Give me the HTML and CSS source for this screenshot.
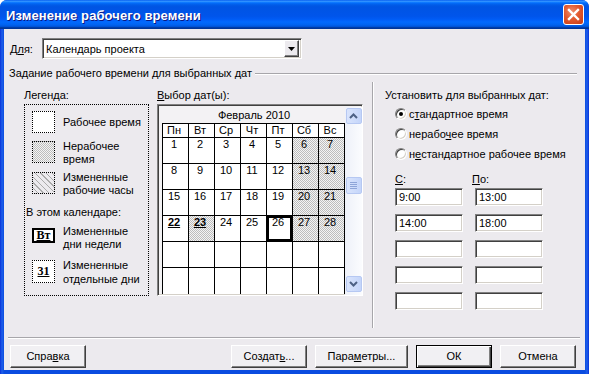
FILE: index.html
```html
<!DOCTYPE html>
<html lang="ru">
<head>
<meta charset="utf-8">
<title>Изменение рабочего времени</title>
<link rel="stylesheet" href="styles.css">
</head>
<body>
<div class="window">
  <div class="titlebar">
    <span class="title">Изменение рабочего времени</span>
    <div class="close">
      <svg width="19" height="19" viewBox="0 0 19 19"><path d="M5 5 L14 14 M14 5 L5 14" stroke="#fff" stroke-width="2.4" stroke-linecap="square"/></svg>
    </div>
  </div>
  <div class="content">
    <div class="for-row">
      <span class="for-label">Д<u>л</u>я:</span>
      <div class="combo">
        <span class="combo-text">Календарь проекта</span>
        <div class="combo-btn"><svg width="7" height="4" viewBox="0 0 7 4"><path d="M0 0 H7 L3.5 4 Z" fill="#000"/></svg></div>
      </div>
    </div>
    <div class="group-title"><span>Задание рабочего времени для выбранных дат</span><div class="etch"></div></div>
    <div class="main">
      <div class="legend-col">
        <div class="col-head">Легенда:</div>
        <div class="legend-box">
          <div class="leg-item r1"><div class="swatch white"></div><div class="leg-text">Рабочее время</div></div>
          <div class="leg-item r2"><div class="swatch gray"></div><div class="leg-text">Нерабочее<br>время</div></div>
          <div class="leg-item r3"><div class="swatch hatch"></div><div class="leg-text">Измененные<br>рабочие часы</div></div>
          <div class="leg-sub">В этом календаре:</div>
          <div class="leg-item r4"><div class="swatch solid"><u>Вт</u></div><div class="leg-text">Измененные<br>дни недели</div></div>
          <div class="leg-item r5"><div class="swatch day"><u>31</u></div><div class="leg-text">Измененные<br>отдельные дни</div></div>
        </div>
      </div>
      <div class="cal-col">
        <div class="col-head"><u>В</u>ыбор дат(ы):</div>
        <div class="cal-box">
          <div class="cal-main">
            <div class="month">Февраль 2010</div>
            <div class="grid">
              <div class="hd">Пн</div><div class="hd">Вт</div><div class="hd">Ср</div><div class="hd">Чт</div><div class="hd">Пт</div><div class="hd">Сб</div><div class="hd">Вс</div>
              <div class="d">1</div><div class="d">2</div><div class="d">3</div><div class="d">4</div><div class="d">5</div><div class="d off">6</div><div class="d off">7</div>
              <div class="d">8</div><div class="d">9</div><div class="d">10</div><div class="d">11</div><div class="d">12</div><div class="d off">13</div><div class="d off">14</div>
              <div class="d">15</div><div class="d">16</div><div class="d">17</div><div class="d">18</div><div class="d">19</div><div class="d off">20</div><div class="d off">21</div>
              <div class="d mod">22</div><div class="d off mod">23</div><div class="d">24</div><div class="d">25</div><div class="d sel">26</div><div class="d off">27</div><div class="d off">28</div>
              <div class="d"></div><div class="d"></div><div class="d"></div><div class="d"></div><div class="d"></div><div class="d"></div><div class="d"></div>
              <div class="d"></div><div class="d"></div><div class="d"></div><div class="d"></div><div class="d"></div><div class="d"></div><div class="d"></div>
            </div>
          </div>
          <div class="scroll">
            <div class="sbtn up"><svg width="9" height="6" viewBox="0 0 9 6"><path d="M1 5 L4.5 1.5 L8 5" fill="none" stroke="#4D6185" stroke-width="2"/></svg></div>
            <div class="thumb"><span></span><span></span><span></span><span></span></div>
            <div class="sbtn down"><svg width="9" height="6" viewBox="0 0 9 6"><path d="M1 1 L4.5 4.5 L8 1" fill="none" stroke="#4D6185" stroke-width="2"/></svg></div>
          </div>
        </div>
      </div>
      <div class="vsep"></div>
      <div class="right-col">
        <div class="set-label">Установить для выбранных дат:</div>
        <div class="radio-row"><span class="radio checked"></span><span>с<u>т</u>андартное время</span></div>
        <div class="radio-row"><span class="radio"></span><span>нерабо<u>ч</u>ее время</span></div>
        <div class="radio-row"><span class="radio"></span><span>н<u>е</u>стандартное рабочее время</span></div>
        <div class="tlabels">
          <div class="tlabel"><u>С</u>:</div>
          <div class="tlabel po"><u>П</u>о:</div>
        </div>
        <div class="times">
          <div class="tin">9:00</div><div class="tin">13:00</div>
          <div class="tin">14:00</div><div class="tin">18:00</div>
          <div class="tin"></div><div class="tin"></div>
          <div class="tin"></div><div class="tin"></div>
          <div class="tin"></div><div class="tin"></div>
        </div>
      </div>
    </div>
    <div class="hsep"></div>
    <div class="buttons">
      <div class="btn">Спра<u>в</u>ка</div>
      <div class="spacer"></div>
      <div class="btn">Создат<u>ь</u>...</div>
      <div class="btn wide">Пара<u>м</u>етры...</div>
      <div class="btn default">ОК</div>
      <div class="btn">Отмена</div>
    </div>
  </div>
</div>
</body>
</html>
```

FILE: styles.css
```css
* { box-sizing: border-box; }
html, body { margin: 0; padding: 0; }
body {
  width: 589px;
  height: 374px;
  overflow: hidden;
  background: #fff;
  font-family: "Liberation Sans", Arial, sans-serif;
  font-size: 11px;
  color: #000;
}
u { text-decoration: underline; text-underline-offset: 1px; }

.window {
  width: 589px;
  height: 374px;
  display: flex;
  flex-direction: column;
  background: linear-gradient(to right, #0831D9 0, #1E5FEA 2px, #0A4CE0 4px, #0A4CE0 585px, #1E5FEA 587px, #0831D9 589px);
  border-radius: 7px 7px 0 0;
  overflow: hidden;
}

.titlebar {
  height: 29px;
  flex: none;
  display: flex;
  align-items: center;
  justify-content: space-between;
  padding: 2px 5px 0 6px;
  background: linear-gradient(to bottom, #0058EE 0%, #3593FF 4%, #288EFF 6%, #127DFF 8%, #036FFC 10%, #0262EE 14%, #0057E5 20%, #0054E3 24%, #0055EB 56%, #005BF5 66%, #026AFE 76%, #0062EF 86%, #0052D6 92%, #0040AB 94%, #003092 100%);
}
.title {
  color: #fff;
  font-weight: bold;
  font-size: 13px;
  letter-spacing: 0.1px;
  text-shadow: 1px 1px #0A1883;
}
.close {
  width: 21px;
  height: 21px;
  border: 1px solid #fff;
  border-radius: 3px;
  background: radial-gradient(circle at 40% 35%, #F08E6D 0%, #E2592F 45%, #C63A14 100%);
  display: flex;
  align-items: center;
  justify-content: center;
  margin-top: -2px;
}

.content {
  flex: 1;
  margin: 0 4px 4px 4px;
  background: #ECEAEE;
  display: flex;
  flex-direction: column;
}

.for-row {
  display: flex;
  align-items: center;
  height: 21px;
  margin-top: 9px;
  padding-left: 6px;
}
.for-label { width: 32px; }
.combo {
  width: 260px;
  height: 21px;
  background: #fff;
  border: 1px solid;
  border-color: #808080 #fff #fff #808080;
  box-shadow: inset 1px 1px #404040, inset -1px -1px #D4D0C8;
  display: flex;
  align-items: center;
  padding: 0 2px 0 2px;
}
.combo-text { flex: 1; padding-left: 1px; }
.combo-btn {
  width: 15px;
  height: 17px;
  background: #ECEAEE;
  border: 1px solid;
  border-color: #fff #404040 #404040 #fff;
  box-shadow: inset -1px -1px #808080;
  display: flex;
  align-items: center;
  justify-content: center;
}

.group-title {
  display: flex;
  align-items: center;
  height: 13px;
  line-height: 13px;
  margin-top: 8px;
  padding-left: 5px;
}
.etch {
  flex: 1;
  height: 2px;
  margin: 0 8px 0 3px;
  border-top: 1px solid #A7A6AA;
  border-bottom: 1px solid #fff;
}

.main {
  display: flex;
  height: 246px;
  margin-top: 2px;
  padding-left: 20px;
}
.col-head {
  height: 13px;
  line-height: 13px;
  margin-bottom: 2px;
}

.legend-col { width: 125px; padding-top: 7px; flex: none; }
.legend-box {
  height: 192px;
  border: 1px dotted #000;
  padding: 6px 0 0 7px;
}
.leg-item { display: flex; height: 22px; }
.swatch {
  width: 23px;
  height: 22px;
  flex: none;
  border: 1px dotted #000;
}
.swatch.white { background: #fff; }
.swatch.gray { background: repeating-conic-gradient(#BDBDBD 0 25%, #F4F4F4 0 50%) 0 0 / 2px 2px; }
.swatch.hatch { background: repeating-linear-gradient(45deg, #ECEAEE 0 3px, #ABABAB 3px 4px); }
.leg-text { margin-left: 8px; line-height: 13px; }
.r1 .leg-text { margin-top: 5px; }
.r2 { margin-top: 8px; }
.r2 .leg-text, .r3 .leg-text { margin-top: -1px; }
.r3 { margin-top: 9px; }
.leg-sub {
  margin: 12px 0 0 -7px;
  padding-left: 1px;
  height: 13px;
  line-height: 13px;
}
.r4 { margin-top: 6px; height: 26px; }
.r5 { margin-top: 7px; height: 28px; }
.r5 .leg-text { line-height: 14px; }
.swatch.solid, .swatch.day {
  background: #fff;
  font-family: "Liberation Serif", "Times New Roman", serif;
  font-weight: bold;
  font-size: 12px;
  display: flex;
  align-items: center;
  justify-content: center;
}
.swatch.solid { height: 15px; margin-top: 3px; border: 2px solid #000; line-height: 11px; }
.swatch.day { height: 23px; margin-top: 2px; }

.cal-col { width: 206px; margin-left: 8px; padding-top: 7px; flex: none; }
.cal-box {
  width: 206px;
  height: 192px;
  border: 1px solid;
  border-color: #808080 #fff #fff #808080;
  box-shadow: inset 1px 1px #404040, inset -1px -1px #D4D0C8;
  background: #F3F2F4;
  display: flex;
  padding: 2px 1px 1px 2px;
  overflow: hidden;
}
.cal-main { width: 185px; padding-left: 2px; overflow: hidden; flex: none; }
.month {
  width: 183px;
  height: 16px;
  line-height: 16px;
  text-align: center;
  padding-left: 1px;
}
.grid {
  width: 183px;
  display: grid;
  grid-template-columns: repeat(7, 25px);
  grid-template-rows: 13px repeat(5, 25px) 40px;
  gap: 1px;
  padding: 1px 1px 0 1px;
  background: #000;
}
.grid > div {
  background: #fff;
  text-align: center;
  padding-right: 3px;
  line-height: 13px;
  font-size: 11px;
}
.grid .off { background: repeating-conic-gradient(#BDBDBD 0 25%, #F4F4F4 0 50%) 0 0 / 2px 2px; }
.grid .mod { font-weight: bold; text-decoration: underline; }
.grid .sel { outline: 2px solid #000; outline-offset: -2px; }

.scroll {
  width: 17px;
  height: 188px;
  flex: none;
  background: linear-gradient(to right, #EEF1F9, #FBFCFE);
  display: flex;
  flex-direction: column;
  align-items: center;
  padding-top: 1px;
}
.sbtn, .thumb {
  width: 16px;
  height: 16px;
  border: 1px solid #B6C8F2;
  border-radius: 2px;
  background: linear-gradient(to right, #D9E4FC, #C4D5FA);
  display: flex;
  align-items: center;
  justify-content: center;
}
.thumb {
  height: 17px;
  margin-top: 53px;
  flex-direction: column;
  gap: 1px;
}
.thumb span { display: block; width: 7px; height: 1px; background: #8EA5D8; }
.sbtn.down { margin-top: 82px; }

.vsep {
  width: 2px;
  height: 246px;
  margin-left: 9px;
  border-left: 1px solid #A7A6AA;
  border-right: 1px solid #fff;
  flex: none;
}

.right-col { margin-left: 11px; padding-top: 7px; flex: 1; }
.set-label { height: 13px; line-height: 13px; margin-bottom: 2px; }
.radio-row {
  display: flex;
  align-items: center;
  height: 20px;
  padding-left: 10px;
}
.radio {
  width: 12px;
  height: 12px;
  border-radius: 50%;
  background: #fff;
  border: 1px solid;
  border-color: #808080 #fff #fff #808080;
  box-shadow: inset 1px 1px #404040, inset -1px -1px #D4D0C8;
  margin-right: 2px;
  display: flex;
  align-items: center;
  justify-content: center;
  flex: none;
}
.radio.checked::after {
  content: "";
  width: 4px;
  height: 4px;
  border-radius: 50%;
  background: #000;
}
.tlabels {
  display: flex;
  padding-left: 10px;
  margin-top: 9px;
  height: 13px;
  line-height: 13px;
}
.tlabel { width: 77px; }
.times {
  display: grid;
  grid-template-columns: 68px 68px;
  grid-auto-rows: 18px;
  column-gap: 12px;
  row-gap: 8px;
  padding-left: 10px;
  margin-top: 2px;
}
.tin {
  height: 18px;
  background: #fff;
  border: 1px solid;
  border-color: #808080 #fff #fff #808080;
  box-shadow: inset 1px 1px #404040, inset -1px -1px #D4D0C8;
  padding-left: 3px;
  line-height: 16px;
}

.hsep {
  height: 2px;
  margin: 9px 5px 0 4px;
  border-top: 1px solid #A7A6AA;
  border-bottom: 1px solid #fff;
}
.buttons {
  display: flex;
  height: 23px;
  margin-top: 6px;
  padding: 0 9px 0 6px;
  gap: 8px;
}
.spacer { flex: 1; }
.btn {
  width: 76px;
  height: 23px;
  line-height: 21px;
  text-align: center;
  background: #F1F0F3;
  border: 1px solid;
  border-color: #fff #404040 #404040 #fff;
  box-shadow: inset -1px -1px #808080;
}
.btn.wide { width: 93px; }
.btn.default {
  border: 1px solid #000;
  box-shadow: inset 1px 1px #fff, inset -1px -1px #404040, inset -2px -2px #808080;
}
```
